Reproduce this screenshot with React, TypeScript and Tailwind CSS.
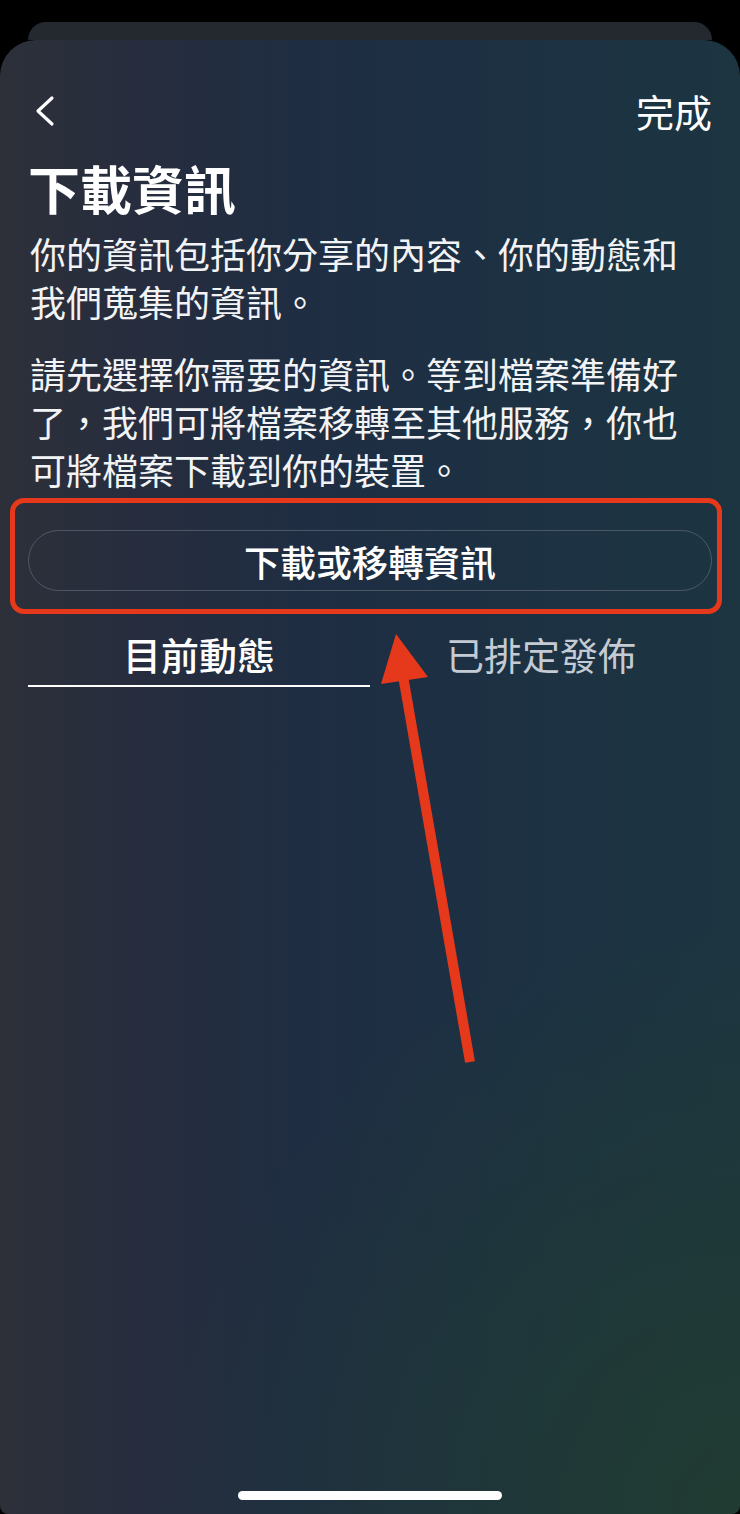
export default function App() {
  const font = { fontFamily: '"Noto Sans CJK TC", "Noto Sans", sans-serif' }

  return (
    <div className="relative w-[740px] h-[1514px] bg-black flex flex-col overflow-hidden" style={font}>
      {/* sheet behind */}
      <div className="mx-[28px] mt-[22px] h-[18px] rounded-t-[22px] bg-[#23292f]" />

      {/* main sheet */}
      <div className="flex-1 flex flex-col rounded-t-[36px] rounded-b-[8px] bg-[radial-gradient(ellipse_80%_40%_at_100%_100%,rgba(33,60,48,0.9)_0%,rgba(31,56,51,0)_100%),linear-gradient(90deg,#2d3039_0%,#272d3e_18%,#1f2d42_40%,#1d3043_62%,#1c3541_100%)] px-[30px] pt-[47px] pb-[14px]">
        {/* header */}
        <div className="flex items-center justify-between h-[48px]">
          <svg width="24" height="32" viewBox="0 0 24 32" className="ml-[2px]">
            <path d="M20 3 L6 16 L20 29" fill="none" stroke="white" strokeWidth="3.2" strokeLinecap="round" strokeLinejoin="round" />
          </svg>
          <span className="text-white text-[38px] leading-[48px] -mr-[2px]">完成</span>
        </div>

        <h1 className="mt-[23px] text-white text-[52px] leading-[60px] font-bold -ml-[2px]">下載資訊</h1>

        <p className="mt-[11px] text-[#f2f3f5] text-[36px] leading-[48px]">
          你的資訊包括你分享的內容、你的動態和我們蒐集的資訊。
        </p>
        <p className="mt-[24px] text-[#f2f3f5] text-[36px] leading-[48px]">
          請先選擇你需要的資訊。等到檔案準備好了，我們可將檔案移轉至其他服務，你也可將檔案下載到你的裝置。
        </p>

        <button className="mt-[37px] -mx-[2px] h-[61px] rounded-full border border-[#4d5866] text-white text-[36px] font-medium flex items-center justify-center">
          下載或移轉資訊
        </button>

        {/* tabs */}
        <div className="mt-[40px] -mx-[2px] grid grid-cols-2">
          <div className="flex flex-col items-center">
            <span className="text-white text-[38px] leading-[46px] font-medium pb-[8px]">目前動態</span>
            <div className="w-full h-[2px] bg-white" />
          </div>
          <div className="flex flex-col items-center">
            <span className="text-[#c4cbd4] text-[38px] leading-[46px] pb-[8px]">已排定發佈</span>
          </div>
        </div>

        <div className="mt-auto flex justify-center">
          <div className="w-[264px] h-[9px] rounded-full bg-white" />
        </div>
      </div>

      {/* annotation: red box */}
      <div className="absolute left-[10px] top-[498px] w-[712px] h-[116px] rounded-[14px] border-[5px] border-[#e6391c] pointer-events-none" />

      {/* annotation: arrow */}
      <svg className="absolute left-0 top-0 pointer-events-none" width="740" height="1514" viewBox="0 0 740 1514">
        <line x1="470" y1="1062" x2="402" y2="670" stroke="#e6391c" strokeWidth="10" />
        <polygon points="396,634 381,684 428,677" fill="#e6391c" />
      </svg>
    </div>
  )
}
